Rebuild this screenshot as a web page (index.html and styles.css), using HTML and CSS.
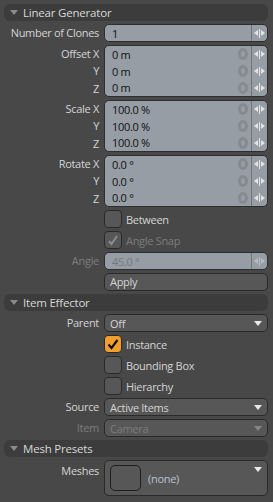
FILE: index.html
```html
<!DOCTYPE html>
<html>
<head>
<meta charset="utf-8">
<link rel="stylesheet" href="styles.css">
</head>
<body>
<div class="panel">
  <div class="section"><span class="tri"></span>Linear Generator</div>
  <div class="row">
    <div class="label">Number of Clones</div>
    <div class="field single">
      <div class="frow"><span class="val">1</span><span class="spin"><i class="al"></i><i class="bar"></i><i class="ar"></i></span></div>
    </div>
  </div>
  <div class="row">
    <div class="labels"><div>Offset X</div><div>Y</div><div>Z</div></div>
    <div class="field group">
      <div class="frow"><span class="val">0 m</span><span class="key"></span><span class="spin"><i class="al"></i><i class="bar"></i><i class="ar"></i></span></div>
      <div class="frow"><span class="val">0 m</span><span class="key"></span><span class="spin"><i class="al"></i><i class="bar"></i><i class="ar"></i></span></div>
      <div class="frow"><span class="val">0 m</span><span class="key"></span><span class="spin"><i class="al"></i><i class="bar"></i><i class="ar"></i></span></div>
    </div>
  </div>
  <div class="row">
    <div class="labels"><div>Scale X</div><div>Y</div><div>Z</div></div>
    <div class="field group">
      <div class="frow"><span class="val">100.0 %</span><span class="key"></span><span class="spin"><i class="al"></i><i class="bar"></i><i class="ar"></i></span></div>
      <div class="frow"><span class="val">100.0 %</span><span class="key"></span><span class="spin"><i class="al"></i><i class="bar"></i><i class="ar"></i></span></div>
      <div class="frow"><span class="val">100.0 %</span><span class="key"></span><span class="spin"><i class="al"></i><i class="bar"></i><i class="ar"></i></span></div>
    </div>
  </div>
  <div class="row">
    <div class="labels"><div>Rotate X</div><div>Y</div><div>Z</div></div>
    <div class="field group">
      <div class="frow"><span class="val">0.0 °</span><span class="key"></span><span class="spin"><i class="al"></i><i class="bar"></i><i class="ar"></i></span></div>
      <div class="frow"><span class="val">0.0 °</span><span class="key"></span><span class="spin"><i class="al"></i><i class="bar"></i><i class="ar"></i></span></div>
      <div class="frow"><span class="val">0.0 °</span><span class="key"></span><span class="spin"><i class="al"></i><i class="bar"></i><i class="ar"></i></span></div>
    </div>
  </div>
  <div class="row">
    <div class="label"></div>
    <div class="check"><span class="box"></span><span class="ctext">Between</span></div>
  </div>
  <div class="row">
    <div class="label"></div>
    <div class="check disabled"><span class="box"><svg width="18" height="18" viewBox="0 0 18 18"><path d="M5 10 L7.5 13 L13 5" fill="none" stroke="#8c8c8c" stroke-width="2"/></svg></span><span class="ctext">Angle Snap</span></div>
  </div>
  <div class="row">
    <div class="label dim">Angle</div>
    <div class="field single disabled">
      <div class="frow"><span class="val">45.0 °</span><span class="spin"><i class="al"></i><i class="bar"></i><i class="ar"></i></span></div>
    </div>
  </div>
  <div class="row">
    <div class="label"></div>
    <div class="button">Apply</div>
  </div>

  <div class="section"><span class="tri"></span>Item Effector</div>
  <div class="row">
    <div class="label">Parent</div>
    <div class="drop"><span>Off</span><span class="darr"></span></div>
  </div>
  <div class="row">
    <div class="label"></div>
    <div class="check"><span class="box on"><svg width="18" height="18" viewBox="0 0 18 18"><path d="M4.5 9.5 L7.5 13 L13.5 5" fill="none" stroke="#111" stroke-width="2.2"/></svg></span><span class="ctext">Instance</span></div>
  </div>
  <div class="row">
    <div class="label"></div>
    <div class="check"><span class="box"></span><span class="ctext">Bounding Box</span></div>
  </div>
  <div class="row">
    <div class="label"></div>
    <div class="check"><span class="box"></span><span class="ctext">Hierarchy</span></div>
  </div>
  <div class="row">
    <div class="label">Source</div>
    <div class="drop"><span>Active Items</span><span class="darr"></span></div>
  </div>
  <div class="row">
    <div class="label dim">Item</div>
    <div class="drop disabled"><span>Camera</span><span class="darr"></span></div>
  </div>

  <div class="section"><span class="tri"></span>Mesh Presets</div>
  <div class="row">
    <div class="label top">Meshes</div>
    <div class="preset"><span class="thumb"></span><span class="none">(none)</span><span class="darr"></span></div>
  </div>
</div>
</body>
</html>
```

FILE: styles.css
```css
html, body {
  margin: 0;
  padding: 0;
  background: #484848;
}
body {
  font-family: "Open Sans", "DejaVu Sans", sans-serif;
  font-size: 11px;
  letter-spacing: -0.3px;
  color: #d4d4d4;
}
.panel {
  padding: 4px 5px 0 4px;
  display: flex;
  flex-direction: column;
  gap: 3px;
}
.section {
  height: 17px;
  background: #3c3c3c;
  border-radius: 6px;
  display: flex;
  align-items: center;
  font-size: 11.5px;
  letter-spacing: -0.2px;
  color: #d8d8d8;
  padding-left: 6px;
}
.tri {
  width: 0;
  height: 0;
  border-left: 4px solid transparent;
  border-right: 4px solid transparent;
  border-top: 5px solid #8a8a8a;
  margin-right: 5px;
}
.row {
  display: grid;
  grid-template-columns: 96px 1fr;
  column-gap: 4px;
}
.label {
  text-align: right;
  height: 18px;
  line-height: 18px;
  padding-right: 1px;
}
.label.top { line-height: 22px; }
.dim { color: #7c7c7c; }
.labels {
  display: flex;
  flex-direction: column;
  justify-content: space-around;
  text-align: right;
  padding-right: 1px;
}
.field {
  background: #969da4;
  border: 1px solid #2e2e2e;
  border-radius: 5px;
  display: flex;
  flex-direction: column;
  color: #111;
  overflow: hidden;
}
.field.single { height: 16px; }
.field.group { height: 50px; }
.frow {
  flex: 1;
  display: flex;
  align-items: center;
}
.val {
  flex: 1;
  padding-left: 7px;
}
.field.disabled .val { color: #737a80; }
.key {
  width: 4px;
  height: 6px;
  border: 3px solid #848a90;
  border-radius: 50%;
  margin-right: 3px;
}
.spin {
  align-self: stretch;
  width: 15px;
  border-left: 1px solid #70767c;
  display: flex;
  align-items: center;
  justify-content: center;
}
.spin .al {
  width: 0; height: 0;
  border-top: 3.5px solid transparent;
  border-bottom: 3.5px solid transparent;
  border-right: 4px solid #e4e4e4;
}
.spin .ar {
  width: 0; height: 0;
  border-top: 3.5px solid transparent;
  border-bottom: 3.5px solid transparent;
  border-left: 4px solid #e4e4e4;
}
.spin .bar {
  width: 1px;
  height: 9px;
  background: #e4e4e4;
  margin: 0 1px;
}
.field.disabled .spin i { border-left-color: #b8bcc0; border-right-color: #b8bcc0; }
.field.disabled .spin .bar { background: #b8bcc0; }
.check {
  display: flex;
  align-items: center;
  height: 18px;
  gap: 4px;
}
.box {
  width: 16px;
  height: 16px;
  background: #575757;
  border: 1px solid #2a2a2a;
  border-radius: 4px;
  display: flex;
  align-items: center;
  justify-content: center;
  overflow: hidden;
}
.box svg { flex: none; }
.box.on { background: #f29e2c; }
.check.disabled .ctext { color: #7c7c7c; }
.ctext { color: #d4d4d4; }
.button {
  height: 16px;
  line-height: 16px;
  background: #575757;
  border: 1px solid #2a2a2a;
  border-radius: 5px;
  padding-left: 5px;
}
.drop {
  height: 16px;
  background: #575757;
  border: 1px solid #2a2a2a;
  border-radius: 5px;
  display: flex;
  align-items: center;
  justify-content: space-between;
  padding: 0 5px 0 5px;
}
.drop.disabled { color: #7c7c7c; }
.darr {
  width: 0; height: 0;
  border-left: 4px solid transparent;
  border-right: 4px solid transparent;
  border-top: 5px solid #e8e8e8;
}
.drop.disabled .darr { border-top-color: #858585; }
.preset {
  height: 34px;
  background: #575757;
  border: 1px solid #2a2a2a;
  border-radius: 5px;
  display: flex;
  align-items: center;
  padding-left: 5px;
  position: relative;
}
.thumb {
  width: 29px;
  height: 24px;
  border: 1px solid #1e1e1e;
  border-radius: 5px;
  background: #575757;
  margin-right: 7px;
}
.none { color: #b6c4d4; }
.preset .darr {
  position: absolute;
  right: 5px;
  top: 6px;
}
```
